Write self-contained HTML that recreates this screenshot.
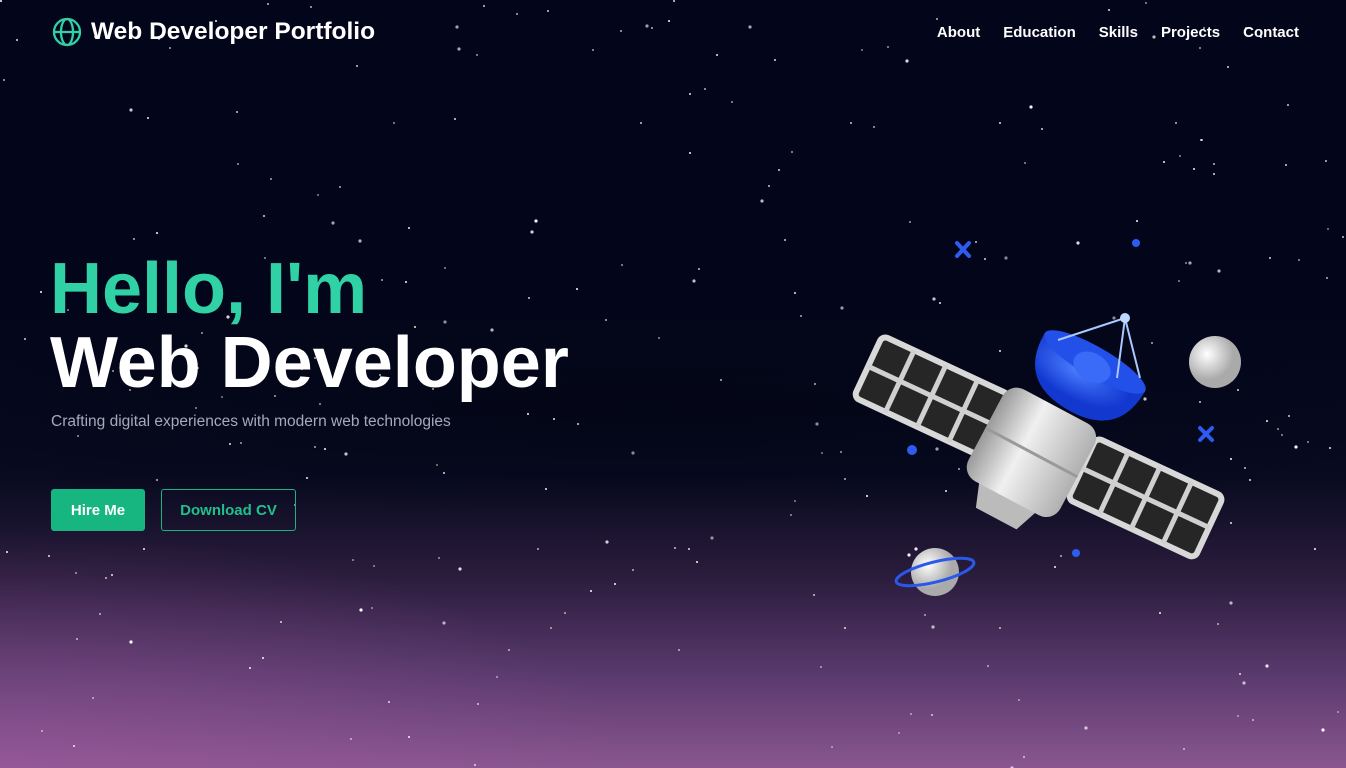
<!DOCTYPE html>
<html><head><meta charset="utf-8"><style>
*{margin:0;padding:0;box-sizing:border-box}
body{width:1346px;height:768px;overflow:hidden;font-family:"Liberation Sans",sans-serif;
background:linear-gradient(180deg,#03061a 0%,#03061a 40%,#080a20 62%,#2a1c3c 75%,#5a3a6e 88%,#8a5690 100%);position:relative}
.glow{position:absolute;left:0;top:0;width:1346px;height:768px;background:radial-gradient(ellipse 900px 340px at 0% 100%,rgba(160,90,160,.45),transparent 70%);}
.dark{position:absolute;left:-200px;top:300px;width:1700px;height:220px;background:radial-gradient(ellipse at center,rgba(3,6,22,.9),transparent 70%)}
.stars{position:absolute;left:0;top:0;width:2px;height:2px;border-radius:50%;background:#fff}
nav{position:absolute;top:0;left:0;width:100%;height:66px}
.logo{position:absolute;left:52px;top:17px;display:flex;align-items:center;color:#fff;font-weight:bold;font-size:24.5px}
.logo svg{margin-right:9px}
.links{position:absolute;right:47px;top:24px;display:flex;gap:23px;color:#fff;font-weight:bold;font-size:15px}
h1{position:absolute;left:50px;font-weight:bold;font-size:72px;letter-spacing:0px}
.h1a{top:248px;color:#2fd1a5}
.h1b{top:322px;color:#fff}
.sub{position:absolute;left:51px;top:413px;color:#a8a8bb;font-size:15.5px}
.btn{position:absolute;top:489px;height:42px;border-radius:3px;font-weight:bold;font-size:15px;display:flex;align-items:center;justify-content:center}
.b1{left:51px;width:94px;background:#17b57f;color:#fff}
.b2{left:161px;width:135px;border:1px solid #17b57f;color:#20c08a}
</style></head><body>
<div class="glow"></div><div class="dark"></div>
<div class="stars" id="s"></div>
<nav><div class="logo"><svg width="30" height="30" viewBox="0 0 30 30" fill="none" stroke="#2fd1a5" stroke-width="2.3"><circle cx="15" cy="15" r="13"/><ellipse cx="15" cy="15" rx="6" ry="13"/><line x1="2" y1="15" x2="28" y2="15"/></svg>Web Developer Portfolio</div>
<div class="links"><span>About</span><span>Education</span><span>Skills</span><span>Projects</span><span>Contact</span></div></nav>
<h1 class="h1a">Hello, I'm</h1>
<h1 class="h1b">Web Developer</h1>
<div class="sub">Crafting digital experiences with modern web technologies</div>
<div class="btn b1">Hire Me</div><div class="btn b2">Download CV</div>
<svg style="position:absolute;left:0;top:0" width="1346" height="768">
<defs>
<linearGradient id="g" x1="0" y1="0" x2="1" y2="0"><stop offset="0" stop-color="#9a9a9a"/><stop offset=".4" stop-color="#f0f0f0"/><stop offset="1" stop-color="#b0b0b0"/></linearGradient>
<radialGradient id="ball" cx=".35" cy=".35"><stop offset="0" stop-color="#fff"/><stop offset="1" stop-color="#aaa"/></radialGradient>
<radialGradient id="blue" cx=".4" cy=".3"><stop offset="0" stop-color="#4a7cff"/><stop offset="1" stop-color="#1238d0"/></radialGradient>
</defs>
<g stroke="#2f5cf0" stroke-width="4" stroke-linecap="round"><path d="M957 243l12 13M969 243l-12 13M1200 428l12 12M1212 428l-12 12"/></g>
<circle cx="1136" cy="243" r="4" fill="#2f5cf0"/><circle cx="912" cy="450" r="5" fill="#2f5cf0"/><circle cx="1076" cy="553" r="4" fill="#2f5cf0"/>
<circle cx="1215" cy="362" r="26" fill="url(#ball)"/>
<g transform="rotate(25 932 395)"><rect x="862" y="362" width="140" height="68" rx="6" fill="#262626" stroke="#d8d8d8" stroke-width="6"/><path d="M897 362v68M932 362v68M967 362v68M862 396h140" stroke="#d0d0d0" stroke-width="5"/></g>
<g transform="rotate(25 1146 497)"><rect x="1076" y="464" width="140" height="68" rx="6" fill="#262626" stroke="#d8d8d8" stroke-width="6"/><path d="M1111 464v68M1146 464v68M1181 464v68M1076 498h140" stroke="#d0d0d0" stroke-width="5"/></g>
<g transform="rotate(28 1030 455)"><path d="M995 495h70l-12 32h-46z" fill="#bbb"/><rect x="978" y="400" width="104" height="104" rx="16" fill="url(#g)"/><path d="M978 452h104" stroke="#999" stroke-width="3"/></g>
<g transform="rotate(30 1095 362)"><path d="M1075 375h40v30h-40z" fill="#6c8ff0"/><path d="M1037 362q0 55 58 55q58 0 58-55z" fill="url(#blue)"/><ellipse cx="1095" cy="362" rx="58" ry="15" fill="#2250e8"/><ellipse cx="1095" cy="368" rx="20" ry="14" fill="#3a6af8"/></g>
<path d="M1058 340l67-22M1125 318l-8 60M1125 318l15 60" stroke="#a8c8ff" stroke-width="2"/><circle cx="1125" cy="318" r="5" fill="#c0d8ff"/>
<circle cx="935" cy="572" r="24" fill="url(#ball)"/><ellipse cx="935" cy="572" rx="40" ry="10" transform="rotate(-14 935 572)" fill="none" stroke="#2a58e8" stroke-width="3"/>
</svg>
<script>
var s=[],x=12345;function r(){x=(x*16807)%2147483647;return x/2147483647}
for(var i=0;i<260;i++){var a=r()*1346,b=r()*768,o=(0.5+r()*0.5).toFixed(2);s.push(a.toFixed(0)+'px '+b.toFixed(0)+'px 0 '+(r()<.2?'0.6px':'0')+' rgba(255,255,255,'+o+')')}
document.getElementById('s').style.boxShadow=s.join(',');
</script>
</body></html>
